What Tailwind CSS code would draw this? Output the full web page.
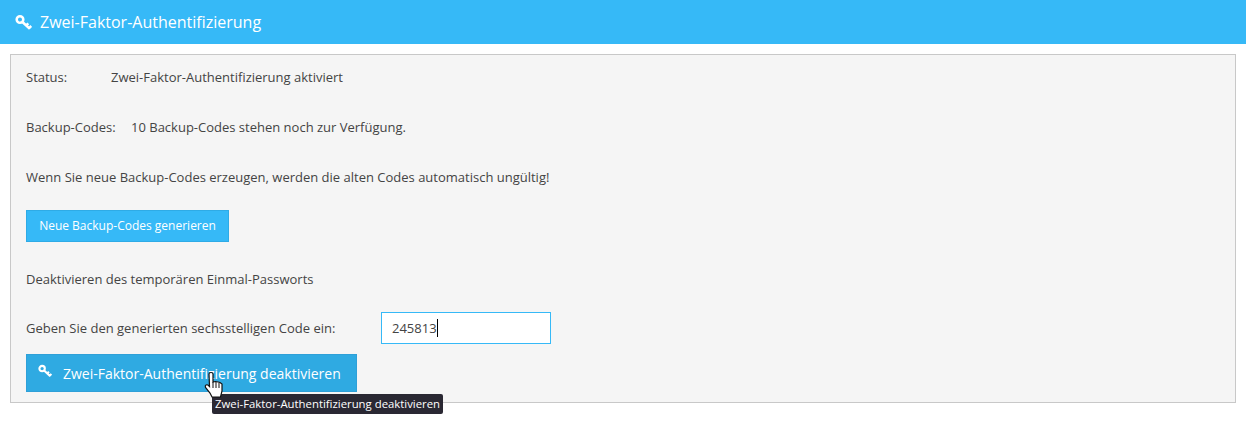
<!DOCTYPE html>
<html lang="de">
<head>
<meta charset="utf-8">
<script src="https://cdn.jsdelivr.net/npm/@tailwindcss/browser@4"></script>
</head>
<body class="bg-white font-['Open_Sans',sans-serif] text-[#444] overflow-hidden">
<div class="relative h-[430px] w-[1246px]">
  <header class="flex h-[44px] items-center gap-[8px] bg-[#36b9f7] pl-[15px] text-[16px] text-white">
    <svg class="h-[17px] w-[17px]" viewBox="0 0 16 16" fill="none" stroke="currentColor"><circle cx="4.700" cy="5.200" r="3.100" stroke-width="2.400"/><path d="M7 7.500 L14 14 M10.500 10.800 L12.500 8.800 M13.300 13.300 L15.300 11.300" stroke-width="2.400"/></svg>
    <span>Zwei-Faktor-Authentifizierung</span>
  </header>
  <main class="mx-[10px] mt-[10px] h-[349px] border border-[#c8c8c8] bg-[#f5f5f5] px-[15px] pt-[12px] text-[13px] leading-[20px]">
    <div class="flex"><span class="w-[85px]">Status:</span><span>Zwei-Faktor-Authentifizierung aktiviert</span></div>
    <div class="mt-[30px] flex"><span class="w-[105px]">Backup-Codes:</span><span>10 Backup-Codes stehen noch zur Verfügung.</span></div>
    <p class="mt-[30px]">Wenn Sie neue Backup-Codes erzeugen, werden die alten Codes automatisch ungültig!</p>
    <button class="mt-[23px] block h-[32px] w-[203px] border border-[#2fabe6] bg-[#36b9f7] text-[12px] text-white">Neue Backup-Codes generieren</button>
    <p class="mt-[27px]">Deaktivieren des temporären Einmal-Passworts</p>
    <div class="mt-[23px] flex items-center">
      <span class="w-[355px]">Geben Sie den generierten sechsstelligen Code ein:</span>
      <div class="flex h-[32px] w-[170px] items-center border border-[#36b9f7] bg-white pl-[10px]"><span>245813</span><span class="h-[18px] w-px bg-black"></span></div>
    </div>
    <button class="mt-[10px] flex h-[38px] w-[331px] items-start border border-[#2fa0d8] bg-[#2faae2] pl-[11px] text-[14px] text-white">
      <svg class="mt-[9px] h-[14px] w-[14px]" viewBox="0 0 16 16" fill="none" stroke="currentColor"><circle cx="4.700" cy="5.200" r="3.100" stroke-width="2.400"/><path d="M7 7.500 L14 14 M10.500 10.800 L12.500 8.800 M13.300 13.300 L15.300 11.300" stroke-width="2.400"/></svg>
      <span class="ml-[11px] mt-[9px]">Zwei-Faktor-Authentifizierung deaktivieren</span>
    </button>
  </main>
  <div class="absolute left-[212px] top-[394px] flex h-[20px] w-[231px] items-center whitespace-nowrap rounded-[2px] bg-[#2a2833] pl-[3px] text-[11.35px] text-white">Zwei-Faktor-Authentifizierung deaktivieren</div>
  <svg class="absolute left-[204px] top-[371px] h-[28px] w-[20px]" viewBox="0 0 20 28"><path d="M5 3 C5 1 9 1 9 3 L9 11 L11.500 10.500 L14 11 L16 11.500 L18 13 L18 20 L16.500 26 L8 26 L6 22 L1.500 16.500 C0.500 14 3 13 4.500 14.500 L5.500 15.500 Z" fill="#fff" stroke="#111" stroke-width="1.200"/><path d="M9 11V17M12 11V17M15 12V17" stroke="#111" stroke-width="1"/></svg>
</div>
</body>
</html>
